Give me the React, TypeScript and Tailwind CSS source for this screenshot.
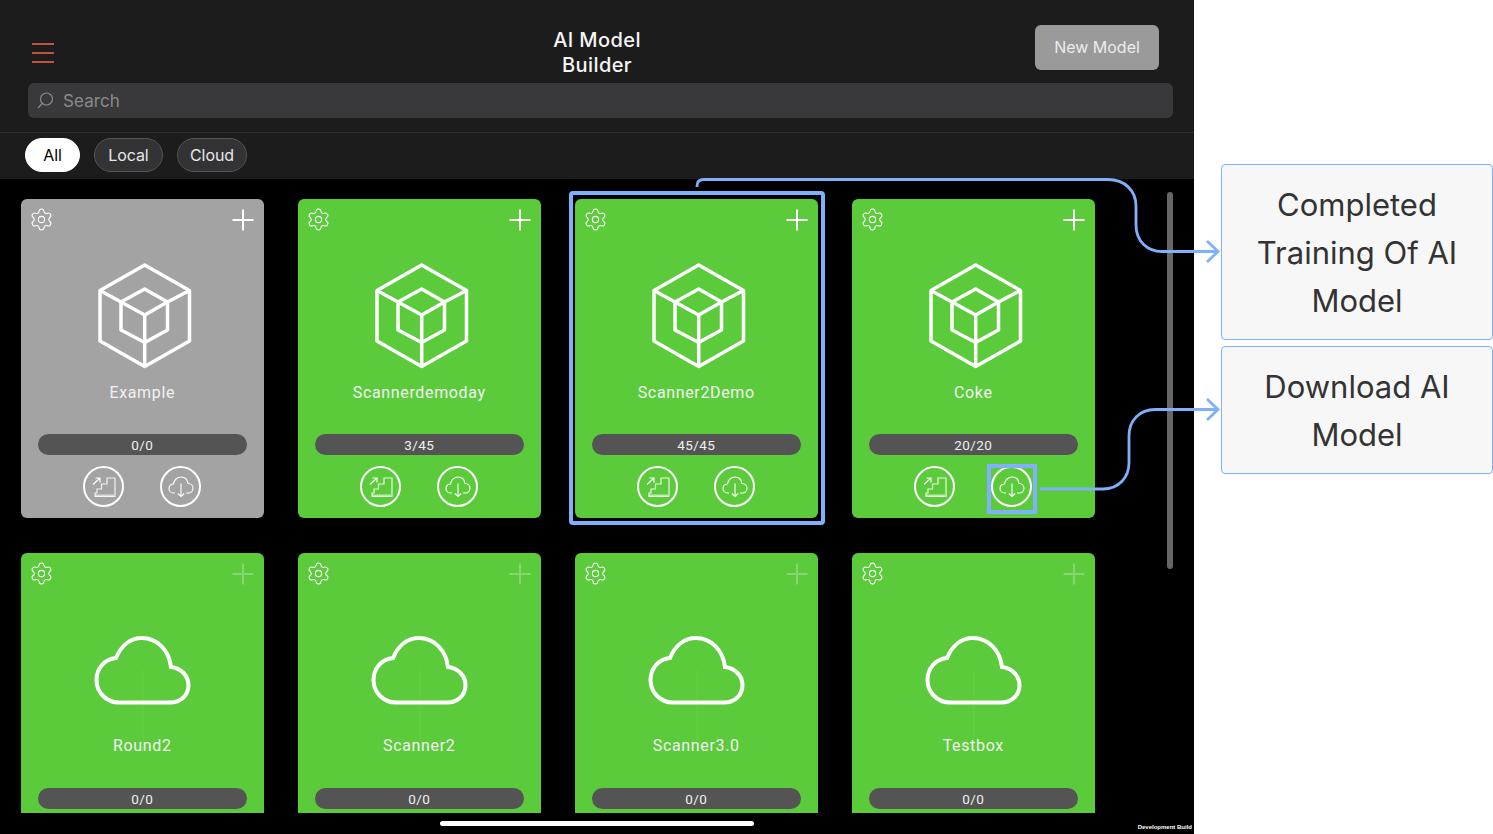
import { Settings } from 'lucide-react'

interface Model {
  name: string
  progress: string
  kind: 'cube' | 'cloud'
  grey?: boolean
  selected?: boolean
  downloadMarked?: boolean
}

const models: Model[] = [
  { name: 'Example', progress: '0/0', kind: 'cube', grey: true },
  { name: 'Scannerdemoday', progress: '3/45', kind: 'cube' },
  { name: 'Scanner2Demo', progress: '45/45', kind: 'cube', selected: true },
  { name: 'Coke', progress: '20/20', kind: 'cube', downloadMarked: true },
  { name: 'Round2', progress: '0/0', kind: 'cloud' },
  { name: 'Scanner2', progress: '0/0', kind: 'cloud' },
  { name: 'Scanner3.0', progress: '0/0', kind: 'cloud' },
  { name: 'Testbox', progress: '0/0', kind: 'cloud' },
]

function CubeIcon() {
  return (
    <svg width="100" height="106" viewBox="94 264 100 106" fill="none" stroke="#fff" strokeWidth="3.5" strokeLinejoin="round" className="ml-[3px]">
      <path d="M144.7 266 189.5 291.5V342L144.7 367.5 100 342V291.5Z" />
      <path d="M144.7 290 167.5 303V331L144.7 343.5 121 331V303Z" />
      <path d="M121 303 144.7 316 167.5 303M144.7 316V367.5M100 291.5 121 303M189.5 291.5 167.5 303" />
    </svg>
  )
}

function CloudIcon() {
  return (
    <svg width="100" height="72" viewBox="0 0 100 72" fill="none" stroke="#fff" strokeWidth="4" className="overflow-visible ml-[3px] mt-[3px]">
      <path d="M25 67.5H76C87 67.5 94.5 60 94.5 50 94.5 41 87 33 77 32 75 15 63 3 48 3 36 3 27 11 22 23 10 24 2.5 34 2.5 45 2.5 57 12 67.5 25 67.5Z" />
      <path d="M49 34V118" stroke="#fff" strokeOpacity="0.06" strokeWidth="1" />
    </svg>
  )
}

function PlusMark({ faint }: { faint: boolean }) {
  return (
    <svg width="22" height="22" viewBox="0 0 22 22" stroke="#fff" strokeWidth="2" strokeOpacity={faint ? 0.25 : 1}>
      <path d="M0.5 11H21.5M11 0.5V21.5" />
    </svg>
  )
}

function StairsButton() {
  return (
    <div className="w-[41px] h-[41px] rounded-full border-2 border-white">
      <svg width="37" height="37" viewBox="2 2 37 37" fill="none" stroke="#fff" strokeWidth="1.2">
        <path d="M12 30.5H32V12H24V18H18.5V23H14V27H12Z" strokeOpacity="0.85" />
        <path d="M12 29.5H31" strokeOpacity="0.6" strokeWidth="2" />
        <path d="M10 18.5 17 12M12.5 12H17V16.5" />
      </svg>
    </div>
  )
}

function DownloadButton({ marked }: { marked?: boolean }) {
  return (
    <div className="relative w-[41px] h-[41px] rounded-full border-2 border-white">
      <svg width="37" height="37" viewBox="2 2 37 37" fill="none" stroke="#fff" strokeWidth="1.1">
        <path d="M15 27H13.5C11 27 9 25 9 22.5 9 20 11 18.3 13.3 18 14.5 14 17.5 11 21 11 25 11 27.5 14 28 17.5 31 17.5 33 19.6 33 22.3 33 25 31 27 28.5 27H26" />
        <path d="M21 17.5V30.5M17.8 27.5 21 30.5 24.2 27.5" />
      </svg>
      {marked && <div className="absolute -left-[6px] -top-[4px] w-[50px] h-[50px] border-4 border-[#7fb0fb]" />}
    </div>
  )
}

function ModelCard({ model }: { model: Model }) {
  return (
    <div className={`relative h-[319px] rounded-md flex flex-col ${model.grey ? 'bg-[#a3a3a3]' : 'bg-[#5bcb3c]'}`}>
      <div className="flex justify-between pl-[8px] pr-[10px] pt-[8px] h-[32px]">
        <Settings size={25} color="#fff" strokeWidth={1} />
        <div className="pt-[2px]">
          <PlusMark faint={model.kind === 'cloud'} />
        </div>
      </div>
      <div className="mt-[32px] h-[106px] flex items-center justify-center">
        {model.kind === 'cube' ? <CubeIcon /> : <CloudIcon />}
      </div>
      <div className="mt-[13.5px] h-[20px] text-center text-[16px] leading-[20px] tracking-[0.65px] text-[#f2f2f2] font-['Roboto',sans-serif]">
        {model.name}
      </div>
      <div className="mt-[31.5px] mx-[17px] h-[21px] rounded-full bg-[#545454] text-center text-[13.5px] leading-[22px] tracking-[0.4px] text-[#f0f0f0] font-['Roboto',sans-serif]">
        {model.progress}
      </div>
      <div className="mt-[11px] pr-[1px] flex justify-center gap-[35.5px]">
        <StairsButton />
        <DownloadButton marked={model.downloadMarked} />
      </div>
      {model.selected && (
        <div className="absolute -left-[6px] -right-[7px] -top-[8px] -bottom-[7px] rounded border-4 border-[#7fb0fb]" />
      )}
    </div>
  )
}

function FilterPill({ label, active, width }: { label: string; active?: boolean; width: string }) {
  return (
    <div
      className={`h-[34px] rounded-full border text-center text-[16px] tracking-[-0.1px] leading-[33px] ${width} ${
        active ? 'bg-white border-white text-black' : 'bg-[#333335] border-[#555] text-[#e8e8e8]'
      }`}
    >
      {label}
    </div>
  )
}

export default function App() {
  return (
    <div className="relative w-[1493px] h-[834px] overflow-hidden bg-white flex font-['Inter',sans-serif]">
      {/* Device screen */}
      <div className="relative w-[1194px] h-full bg-black flex flex-col">
        <div className="bg-[#1c1c1c]">
          <div className="h-[133px] pl-[28px] pr-[21px] pt-[25px] border-b border-[#2e2e2e]">
            <div className="h-[58px] pr-[14px] grid grid-cols-[1fr_auto_1fr]">
              <div className="w-[22px] mt-[18px] ml-[4px] flex flex-col gap-[7.5px]">
                <div className="h-[1.5px] bg-[#c0503f]" />
                <div className="h-[1.5px] bg-[#c0503f]" />
                <div className="h-[1.5px] bg-[#c0503f]" />
              </div>
              <div className="ml-[7px] text-center text-[20px] leading-[24.5px] font-medium tracking-[0.4px] text-[#f5f5f5] pt-[3px]">
                AI Model
                <br />
                Builder
              </div>
              <div className="justify-self-end w-[124px] h-[45px] rounded-md bg-[#9a9a9a] text-center text-[16px] leading-[45px] text-[#ececec]">
                New Model
              </div>
            </div>
            <div className="h-[35px] rounded-md bg-[#39393b] flex items-center pl-[9px] gap-[9px] text-[17px] tracking-[0.1px] text-[#8a8a8c]">
              <svg width="17" height="17" viewBox="0 0 17 17" fill="none" stroke="#8a8a8c" strokeWidth="1.2">
                <circle cx="9.5" cy="7" r="6" />
                <path d="M5.2 11.5 1 16" />
              </svg>
              <span className="pt-[2px]">Search</span>
            </div>
          </div>
          <div className="h-[46px] pl-[25px] pt-[5px] flex gap-[14px]">
            <FilterPill label="All" active width="w-[55px]" />
            <FilterPill label="Local" width="w-[69px]" />
            <FilterPill label="Cloud" width="w-[70px]" />
          </div>
        </div>

        <div className="h-[634px] overflow-hidden pt-[20px] pl-[21px]">
          <div className="grid grid-cols-[repeat(4,242.5px)] gap-x-[34.5px] gap-y-[34.5px]">
            {models.map(m => (
              <ModelCard key={m.name} model={m} />
            ))}
          </div>
        </div>

        <div className="relative flex-1 flex justify-center pt-[8px]">
          <div className="w-[314px] h-[5px] rounded-full bg-white" />
          <div className="absolute right-[2px] bottom-[3px] text-[6px] leading-[7px] font-bold text-white font-['Liberation_Sans',sans-serif]">
            Development Build
          </div>
        </div>

        {/* Scrollbar */}
        <div className="absolute left-[1167px] top-[192px] w-[6px] h-[377px] rounded-full bg-[#666]" />
      </div>

      {/* Annotation boxes */}
      <div className="flex-1 pl-[27px] pt-[164px] flex flex-col gap-[6px]">
        <div className="h-[176px] rounded-sm border border-[#7fb0fb] bg-[#f7f7f7] px-4 pt-[2px] flex items-center justify-center text-center text-[31px] leading-[48px] text-[#333]">
          Completed Training Of AI Model
        </div>
        <div className="h-[128px] rounded-sm border border-[#7fb0fb] bg-[#f7f7f7] px-4 pt-[2px] flex items-center justify-center text-center text-[31px] leading-[48px] text-[#333]">
          Download AI Model
        </div>
      </div>

      {/* Connectors */}
      <svg className="absolute left-0 top-0 pointer-events-none" width="1493" height="834" fill="none" stroke="#7fb0fb" strokeWidth="2.8">
        <path d="M697 187V186C697 181.5 699.5 179.5 704 179.5H1108C1125 179.5 1136 191 1136 206V225C1136 241 1147 251.5 1162 251.5H1217" />
        <path d="M1207 241 1218 251.5 1207 262" />
        <path d="M1040 489H1103C1119 489 1129 477 1129 463V436C1129 420 1140 409.5 1155 409.5H1217" />
        <path d="M1207 399 1218 409.5 1207 420" />
      </svg>
    </div>
  )
}
